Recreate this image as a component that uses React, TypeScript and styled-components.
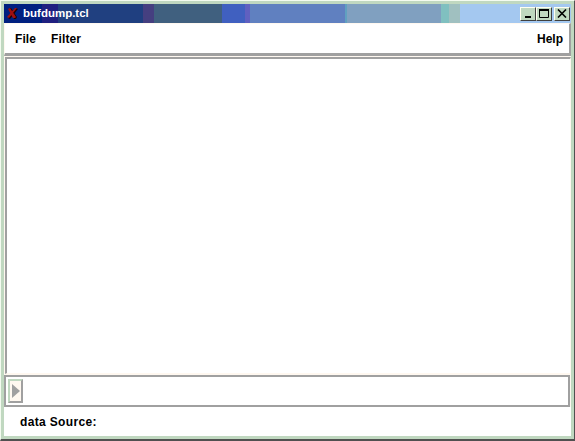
import React from "react";
import styled, { createGlobalStyle } from "styled-components";

const Global = createGlobalStyle`
  html, body { margin: 0; padding: 0; background: #fff; }
  body { font-family: "Liberation Sans", Arial, sans-serif; }
`;

const Frame = styled.div`
  box-sizing: border-box;
  width: 575px;
  height: 441px;
  display: flex;
  flex-direction: column;
  background: #c0d8c0;
  border-style: solid;
  border-width: 1px 1px 2px 1px;
  border-color: #f4fbf0 #505050 #505050 #f4fbf0;
  padding: 3px 3px 3px 3px;
`;

const TitleBar = styled.div`
  flex: none;
  height: 19px;
  display: flex;
  align-items: center;
  justify-content: space-between;
  background: linear-gradient(
    to right,
    #002080 0 38px,
    #202080 38px 54px,
    #204080 54px 126px,
    #1f3f80 126px 139px,
    #453f80 139px 150px,
    #40607f 150px 218px,
    #4060c0 218px 241px,
    #6060c0 241px 246px,
    #6080c0 246px 341px,
    #60a0c0 341px 343px,
    #80a0c0 343px 437px,
    #80c0c0 437px 445px,
    #a0c0c0 445px 456px,
    #a4c8f0 456px
  );
`;

const TitleLeft = styled.div`
  display: flex;
  align-items: center;
  gap: 5px;
  padding-left: 3px;
`;

const TitleText = styled.span`
  color: #fff;
  font-weight: 700;
  font-size: 11.5px;
  line-height: 19px;
`;

const WinButtons = styled.div`
  display: flex;
  align-items: center;
  padding-right: 1px;
`;

const WinButton = styled.div<{ $gap?: boolean }>`
  box-sizing: border-box;
  width: 16px;
  height: 14px;
  margin-left: ${(p) => (p.$gap ? 2 : 0)}px;
  background: #c0d8c0;
  border-style: solid;
  border-width: 1px;
  border-color: #fffff0 #404040 #404040 #fffff0;
  display: flex;
  align-items: center;
  justify-content: center;
`;

const Body = styled.div`
  flex: 1;
  min-height: 0;
  display: flex;
  flex-direction: column;
  background: #fff8f0;
`;

const MenuBar = styled.div`
  flex: none;
  box-sizing: border-box;
  height: 33px;
  margin-bottom: 1px;
  display: flex;
  align-items: center;
  padding: 0 6px 0 10px;
  background: #fff;
  border-style: solid;
  border-width: 1px 2px 3px 1px;
  border-color: #fff8f0 #a0a0a0 #a0a0a0 #fff8f0;
`;

const MenuItem = styled.span<{ $push?: boolean }>`
  font-size: 12px;
  font-weight: 700;
  letter-spacing: ${(p) => (p.$push ? 0 : 0.1)}px;
  color: #000;
  margin-right: ${(p) => (p.$push ? 0 : 15)}px;
  margin-left: ${(p) => (p.$push ? "auto" : 0)};
`;

const TextPane = styled.div`
  flex: 1;
  margin-left: 1px;
  margin-bottom: 1px;
  background: #fff;
  border-style: solid;
  border-width: 2px 1px 1px 2px;
  border-color: #a0a0a0 #fff8f0 #fff8f0 #a0a0a0;
`;

const InputRow = styled.div`
  flex: none;
  box-sizing: border-box;
  height: 32px;
  margin-right: 1px;
  display: flex;
  align-items: center;
  padding-left: 2px;
  background: #fff;
  border: 2px solid #a0a0a0;
`;

const Expander = styled.div`
  box-sizing: border-box;
  width: 15px;
  height: 24px;
  display: flex;
  align-items: center;
  background: #fff8f0;
  border-style: solid;
  border-width: 2px;
  border-color: #c0d8c0 #a0a0a0 #a0a0a0 #c0d8c0;
`;

const StatusRow = styled.div`
  flex: none;
  height: 29px;
  box-sizing: border-box;
  padding: 1px 0 0 16px;
  display: flex;
  align-items: center;
  background: #fff;
  font-size: 12px;
  font-weight: 700;
  letter-spacing: 0.35px;
  color: #000;
`;

export default function App() {
  return (
    <>
      <Global />
      <Frame>
        <TitleBar>
          <TitleLeft>
            <svg width="11" height="13" viewBox="0 0 11 13">
              <path d="M2 2L4 1L10 10L9 12L7 12Z" fill="#200000" />
              <path d="M9 1L11 2L3 12L1 11Z" fill="#200000" />
              <path d="M1 2L3 1L9 10L8 11L6 11Z" fill="#a01010" />
              <path d="M8 1L10 1L2 11L0 10Z" fill="#a01010" />
            </svg>
            <TitleText>bufdump.tcl</TitleText>
          </TitleLeft>
          <WinButtons>
            <WinButton>
              <svg width="10" height="10" viewBox="0 0 10 10">
                <rect x="2" y="7" width="6" height="2" fill="#000" />
              </svg>
            </WinButton>
            <WinButton>
              <svg width="12" height="10" viewBox="0 0 12 10">
                <path d="M1.5 1.5H10.5V8.5H1.5Z" fill="none" stroke="#000" strokeWidth="1" />
                <rect x="1" y="0" width="10" height="2" fill="#000" />
              </svg>
            </WinButton>
            <WinButton $gap>
              <svg width="10" height="9" viewBox="0 0 10 9">
                <path d="M1 0.5L9 8.5M9 0.5L1 8.5" stroke="#000" strokeWidth="1.6" fill="none" />
              </svg>
            </WinButton>
          </WinButtons>
        </TitleBar>
        <Body>
          <MenuBar>
            <MenuItem>File</MenuItem>
            <MenuItem>Filter</MenuItem>
            <MenuItem $push>Help</MenuItem>
          </MenuBar>
          <TextPane />
          <InputRow>
            <Expander>
              <svg width="11" height="16" viewBox="0 0 11 16">
                <path d="M2 1L10 8L2 15Z" fill="#a0a0a0" />
              </svg>
            </Expander>
          </InputRow>
          <StatusRow>data Source:</StatusRow>
        </Body>
      </Frame>
    </>
  );
}
